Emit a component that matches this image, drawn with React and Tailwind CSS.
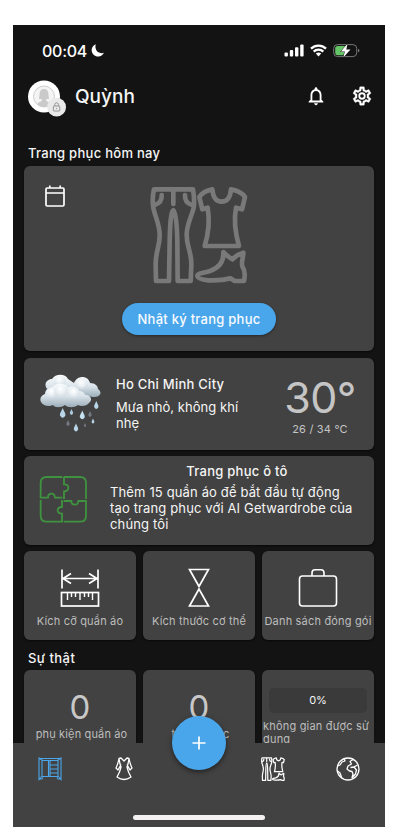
import React from "react";

const card = "bg-[#424242] rounded-[6px] shadow-[0_1px_2px_rgba(0,0,0,0.6)]";

function OutfitIcon({ className, stroke, width }) {
  return (
    <svg className={className} viewBox="120 33 294 294" fill="none" stroke={stroke} strokeWidth={width} strokeLinecap="round" strokeLinejoin="round">
      <path d="M132 43H249C252 61 254 80 251 98C246 122 231 144 230 178C229 214 245 230 244 270L242 318H203L202 200C201 150 197 105 190 105C183 105 180 150 179 200L177 318H138L137 270C136 230 150 214 149 178C148 144 134 122 130 98C127 80 128 61 132 43Z" />
      <path d="M190 48V87M155 60C156 76 148 86 134 90M225 60C224 76 232 86 246 90" />
      <path d="M307 43C309 66 317 80 335 80C353 80 361 66 363 43C380 46 395 51 405 66L396 103L378 98C370 140 376 175 387 213H284C296 175 300 140 293 98L277 103L268 66C278 51 290 46 307 43Z" />
      <path d="M340 231C347 240 357 247 368 253C376 243 389 236 400 233C400 248 393 262 397 274C404 284 406 300 402 318H374L361 310C340 316 322 317 295 316C275 314 262 310 262 302C264 294 280 294 300 288C328 278 342 258 340 231Z" />
    </svg>
  );
}

function StatusBar() {
  return (
    <div className="flex h-[51px] items-center pl-[29px] pr-[25px] text-[#fff]">
      <span className="w-[46px] whitespace-nowrap text-[16px] font-medium leading-5 tracking-[-0.25px]">00:04</span>
      <svg className="ml-[3px] h-[13px] w-[13px]" viewBox="0 0 13 13" fill="#fff">
        <path d="M4.800 0.200A6.400 6.400 0 1 0 12.900 8.800C10.500 9.600 7.400 8.900 5.900 7C4.400 5 4.100 2.300 4.800 0.200Z" />
      </svg>
      <svg className="ml-auto h-[13px] w-[20px]" viewBox="0 0 20 13" fill="#fff">
        <rect x="0.5" y="8.4" width="3.4" height="4.2" rx="1" />
        <rect x="5.8" y="6" width="3.4" height="6.6" rx="1" />
        <rect x="11" y="3.2" width="3.4" height="9.4" rx="1" />
        <rect x="16.2" y="0.5" width="3.4" height="12.1" rx="1" />
      </svg>
      <svg className="ml-[6px] h-[13px] w-[17px]" viewBox="0 0 17 13" fill="none" stroke="#fff" strokeWidth="2.3">
        <path d="M1 4.6A10.7 10.7 0 0 1 16 4.6M3.7 7.6A6.8 6.8 0 0 1 13.3 7.6" />
        <path d="M5.8 9.6Q8.5 7.6 11.2 9.6L8.5 12.6Z" fill="#fff" stroke="none" />
      </svg>
      <svg className="ml-[6px] h-[15px] w-[27px]" viewBox="0 0 27 15" fill="none">
        <rect x="0.7" y="1.6" width="23" height="12" rx="3.8" stroke="#777" strokeWidth="1" />
        <path d="M4.7 3H12V12.2H4.7Q2.2 12.2 2.2 9.7V5.5Q2.2 3 4.7 3Z" fill="#65c466" />
        <path d="M25 5.7V9.5Q26.4 9 26.4 7.6T25 5.7Z" fill="#777" />
        <path d="M14.500 0.800L7.800 8.500H11.900L10.300 14.500L17.500 6.600H13.300Z" fill="#fff" stroke="#131313" strokeWidth="1" paintOrder="stroke" />
      </svg>
    </div>
  );
}

function Header() {
  return (
    <div className="flex h-[47px] items-start pl-[15px] pr-[12px] pt-[3px]">
      <svg className="h-[40px] w-[40px] shrink-0" viewBox="0 0 40 40">
        <circle cx="16" cy="17.5" r="16" fill="#fff" />
        <circle cx="16" cy="17.5" r="10.5" fill="#f4f4f4" stroke="#cfcfcf" strokeWidth="1" />
        <path d="M16 10C12.6 10 11.6 12.5 11.5 15.5C11.5 18 11 19 10.8 20H13.7V22C11.5 23 9.8 23.3 9.4 25.2Q12 28 16 28T22.6 25.2C22.2 23.3 20.5 23 18.3 22V20H21.2C21 19 20.5 18 20.5 15.5C20.4 12.5 19.4 10 16 10Z" fill="#cacaca" />
        <circle cx="28.6" cy="28.2" r="9.4" fill="#e9e9e9" />
        <rect x="25.4" y="27" width="6.4" height="5" rx="0.6" fill="none" stroke="#8b8b8b" strokeWidth="0.9" />
        <path d="M26.8 27V25.6A1.8 1.8 0 0 1 30.4 25.6V27M28.1 29.5H29.1" fill="none" stroke="#8b8b8b" strokeWidth="0.9" />
      </svg>
      <span className="ml-[7px] mt-[5px] text-[19px] font-medium leading-[26px] text-[#f5f5f5]">Quỳnh</span>
      <svg className="ml-auto mt-[6px] h-[22px] w-[22px]" viewBox="0 0 24 24" fill="#fff">
        <path d="M12 22c1.1 0 2-.9 2-2h-4c0 1.1.9 2 2 2zm6-6v-5c0-3.07-1.63-5.64-4.5-6.32V4c0-.83-.67-1.500-1.500-1.500s-1.500.67-1.500 1.500v.68C7.640 5.360 6 7.920 6 11v5l-2 2v1h16v-1l-2-2zm-2 1H8v-6c0-2.480 1.510-4.500 4-4.500s4 2.020 4 4.500v6z" />
      </svg>
      <svg className="ml-[24px] mt-[6px] h-[22px] w-[22px]" viewBox="0 0 24 24" fill="#fff">
        <path d="M19.430 12.980c.04-.32.07-.64.07-.98 0-.34-.03-.66-.07-.98l2.110-1.650c.19-.15.24-.42.12-.64l-2-3.460c-.09-.16-.26-.25-.44-.25-.06 0-.12.010-.17.030l-2.490 1c-.52-.4-1.080-.73-1.690-.98l-.38-2.650C14.460 2.180 14.250 2 14 2h-4c-.25 0-.46.18-.49.42l-.38 2.650c-.61.25-1.170.59-1.690.98l-2.490-1c-.06-.02-.12-.03-.18-.03-.17 0-.34.09-.43.250l-2 3.460c-.13.22-.07.49.12.64l2.110 1.650c-.04.32-.07.65-.07.98 0 .33.030.66.07.98l-2.110 1.650c-.19.15-.24.42-.12.64l2 3.460c.09.16.26.25.44.25.06 0 .12-.01.17-.03l2.490-1c.52.4 1.080.73 1.690.98l.38 2.650c.03.24.24.42.49.42h4c.25 0 .46-.18.49-.42l.38-2.650c.61-.25 1.170-.59 1.690-.98l2.490 1c.06.02.12.03.18.03.17 0 .34-.09.43-.25l2-3.460c.12-.22.07-.49-.12-.64l-2.110-1.650zm-1.980-1.710c.04.31.05.52.05.73 0 .21-.02.43-.05.73l-.14 1.130.89.7 1.080.84-.7 1.210-1.270-.51-1.040-.42-.9.68c-.43.32-.84.56-1.250.73l-1.060.43-.16 1.130-.2 1.350h-1.400l-.19-1.350-.16-1.130-1.060-.43c-.43-.18-.83-.41-1.230-.71l-.91-.7-1.060.43-1.270.51-.7-1.210 1.080-.84.89-.7-.14-1.130c-.03-.31-.05-.54-.05-.74s.02-.43.05-.73l.14-1.130-.89-.7-1.080-.84.7-1.210 1.270.51 1.040.42.9-.68c.43-.32.84-.56 1.250-.73l1.060-.43.16-1.130.2-1.350h1.390l.19 1.350.16 1.130 1.060.43c.43.18.83.41 1.230.71l.91.7 1.060-.43 1.270-.51.7 1.210-1.070.85-.89.7.14 1.130z" stroke="#fff" strokeWidth="0.4" />
        <circle cx="12" cy="12" r="3" fill="none" stroke="#fff" strokeWidth="2" />
      </svg>
    </div>
  );
}

function RainIcon() {
  const drops = [
    [51.700, 172, 10, "#b9d6e8"], [57, 182, 6, "#737980"], [60.500, 171, 6, "#a9c7db"], [65, 186.500, 8, "#b9d6e8"],
    [71.300, 174, 9, "#c5e0f0"], [74, 184, 4, "#737980"], [79, 173, 6, "#737980"], [82, 180, 5, "#b9d6e8"], [85.300, 164, 8, "#b9d6e8"],
  ];
  return (
    <svg className="h-[60px] w-[62px] shrink-0" viewBox="29 133 62 60">
      <defs>
        <linearGradient id="cloud" x1="0" y1="0" x2="0" y2="1">
          <stop offset="0" stopColor="#fafcfd" /><stop offset="0.5" stopColor="#dce5eb" /><stop offset="1" stopColor="#9badb9" />
        </linearGradient>
        <radialGradient id="puff" cx="0.45" cy="0.25" r="0.75">
          <stop offset="0" stopColor="#fff" /><stop offset="0.5" stopColor="#e8eef2" /><stop offset="1" stopColor="#c4d1da" stopOpacity="0" />
        </radialGradient>
      </defs>
      <path d="M35 146C33 142 37 138 41 138C44 133 54 132 57 138C59 139 61 141 63 142C66 134 77 134 79 142C84 142 87 145 87 148C92 152 89 156 82 156L42 149C38 149 35 148 35 146Z" fill="url(#cloud)" />
      <circle cx="49" cy="141" r="6" fill="url(#puff)" /><circle cx="71" cy="144" r="6" fill="url(#puff)" />
      <path d="M30 161C28 157 31 154 34 153C34 148 39 146 42 146C44 142 54 141 57 147C60 144 67 146 68 150C71 150 74 152 74 154C80 154 82 159 78 162C76 165 70 166 67 164C63 167 57 167 54 164C50 167 44 167 42 164C38 166 32 165 30 161Z" fill="url(#cloud)" />
      <circle cx="41" cy="153" r="6" fill="url(#puff)" /><circle cx="50" cy="151" r="7" fill="url(#puff)" /><circle cx="63" cy="153" r="6" fill="url(#puff)" />
      {drops.map(([x, y, h, c]) => (
        <path key={x} d={`M${x} ${y - h / 2}C${x + h * 0.15} ${y - h * 0.1} ${x + h * 0.3} ${y} ${x + h * 0.27} ${y + h * 0.25}Q${x} ${y + h * 0.72} ${x - h * 0.27} ${y + h * 0.25}C${x - h * 0.3} ${y} ${x - h * 0.15} ${y - h * 0.1} ${x} ${y - h / 2}Z`} fill={c} />
      ))}
    </svg>
  );
}

function PuzzleIcon() {
  return (
    <svg className="h-[48px] w-[48px] shrink-0" viewBox="88 77 144 144" fill="none" stroke="#3f923f" strokeWidth="5.500">
      <path d="M158 83H111Q93 83 93 101V145H115Q115 133 125 133T136 145H158" />
      <path d="M162 83H211Q229 83 229 101V149M163 83V105Q176 105 176 115T163 126V149" />
      <path d="M93 152V199Q93 217 111 217H157V193Q144 193 144 183T157 173V152" />
      <path d="M162 155H185Q185 166 195 166T206 155H229V199Q229 217 211 217H162" />
    </svg>
  );
}

function Tool({ label, children }) {
  return (
    <div className={`flex h-[89px] flex-col items-center pt-[17px] ${card}`}>
      {children}
      <span className="mt-[5px] whitespace-nowrap text-[11px] leading-[16px] tracking-[0.18px] text-[#bdbdbd]">{label}</span>
    </div>
  );
}

function Tools() {
  return (
    <div className="mt-[6px] grid grid-cols-3 gap-[7px]">
      <Tool label="Kích cỡ quần áo">
        <svg className="h-[40px] w-[40px]" viewBox="0 0 40 40" fill="none" stroke="#fff" strokeWidth="1.700">
          <path d="M2 1.500V20.500M38 1.500V20.500M3 10.500H37M11 5.500L3 10.500L11 15.500M29 5.500L37 10.500L29 15.500" />
          <rect x="1.500" y="24.500" width="37" height="13.500" />
          <path d="M7.500 25V32M11.500 25V29M15.500 25V29M20 25V32M24.500 25V29M28.500 25V29M32.500 25V32" strokeWidth="1.400" />
        </svg>
      </Tool>
      <Tool label="Kích thước cơ thể">
        <svg className="h-[40px] w-[40px]" viewBox="0 0 40 40" fill="none" stroke="#fff" strokeWidth="1.700">
          <path d="M10.500 1.500H29.500L20 18.500ZM20 21L10.500 38H29.500Z" />
        </svg>
      </Tool>
      <Tool label="Danh sách đóng gói">
        <svg className="h-[40px] w-[40px]" viewBox="0 0 40 40" fill="none" stroke="#fff" strokeWidth="1.600">
          <rect x="1.500" y="8" width="37" height="30" rx="3" />
          <path d="M14 8V5Q14 1.800 17 1.800H23Q26 1.800 26 5V8" />
        </svg>
      </Tool>
    </div>
  );
}

function Count({ value, label }) {
  return (
    <div className={`flex h-[90px] flex-col items-center pt-[18px] ${card}`}>
      <span className="text-[33px] leading-[38px] text-[#c8c8c8]">{value}</span>
      <span className="whitespace-nowrap pl-[3px] text-[11px] leading-[16px] tracking-[0.15px] text-[#bdbdbd]">{label}</span>
    </div>
  );
}

function Facts() {
  return (
    <div className="mt-[3px] grid grid-cols-3 gap-[7px]">
      <Count value="0" label="phụ kiện quần áo" />
      <Count value="0" label="trang phục" />
      <div className={`flex h-[120px] flex-col pt-[18px] ${card}`}>
        <div className="mx-[7px] h-[25px] rounded-[5px] bg-[#3a3a3a] text-center text-[11px] leading-[25px] text-[#f5f5f5]">0%</div>
        <span className="mt-[7px] whitespace-nowrap pl-px text-[11px] leading-[13px] tracking-[0.2px] text-[#bdbdbd]">không gian được sử<br />dụng</span>
      </div>
    </div>
  );
}

function BottomNav() {
  return (
    <nav className="relative flex h-[84px] flex-col bg-[#424242]">
      <div className="grid grid-cols-5 items-start justify-items-center pt-[14px]">
        <svg className="h-[24px] w-[24px]" viewBox="0 0 24 24" fill="none" stroke="#4ba6ea" strokeWidth="1.100">
          <path d="M1 1L4 3V19L1 22.500ZM23 1L20 3V19L23 22.500ZM1 1.500H23M4 3.500H20M4 19.500H20M1 22H4L5 20.500M23 22H20L19 20.500M4 4V20M12 4V19.500M20 4V20M12 8H20M12 12H20M12 16H20M10.500 4V19" />
        </svg>
        <svg className="mr-[2px] h-[24px] w-[18px]" viewBox="0 0 18 24" fill="none" stroke="#fff" strokeWidth="1.300" strokeLinejoin="round">
          <path d="M4 1.500L6 1L9 4L12 1L14 1.500L13 7L12 10Q13 15 16 20Q9 25 2 20Q5 15 6 10L5 7ZM4 1.500Q3 7 1 11L3 13L6 7.500M14 1.500Q15 7 17 11L15 13L12 7.500" />
        </svg>
        <span />
        <OutfitIcon className="h-[24px] w-[24px]" stroke="#fff" width="15" />
        <svg className="h-[24px] w-[24px]" viewBox="0 0 24 24" fill="none" stroke="#fff" strokeWidth="1.300" strokeLinejoin="round">
          <circle cx="12" cy="12" r="11" />
          <path d="M1.500 9L4 8L6 5L9 4L8 1.800M1.500 14L4 16L5.500 20M17 2.500L14 4.500L15.500 7L12 9L11 12L13.500 14L16 14.500L17 17L16 21L19.500 17L20.500 13L18 10L14.500 10.500M18 10L21.500 8" />
        </svg>
      </div>
      <div className="mt-auto mb-[7px] h-[5px] w-[132px] self-center rounded-full bg-[#f4f0f2]" />
      <button className="absolute left-[159px] top-[-27px] flex h-[54px] w-[54px] items-center justify-center rounded-full bg-[#4aa6ea] shadow-[0_2px_5px_rgba(0,0,0,0.5)]">
        <svg className="h-[14px] w-[14px]" viewBox="0 0 14 14" stroke="#fff" strokeWidth="1.700"><path d="M7 .5V13.500M.5 7H13.500" /></svg>
      </button>
    </nav>
  );
}

export default function App() {
  return (
    <div className="h-[838px] w-[410px] overflow-hidden bg-white pl-[13px] pt-[25px] font-['Inter',sans-serif]">
      <div className="flex h-[802px] w-[372px] flex-col overflow-hidden bg-[#131313]">
        <StatusBar />
        <Header />
        <main className="min-h-0 flex-1 overflow-hidden pl-[11px] pr-[11px]">
          <h2 className="mt-[21px] pl-[4px] text-[13px] font-medium leading-[18px] tracking-[0.28px] text-[#f5f5f5]">Trang phục hôm nay</h2>
          <section className={`mt-[4px] grid h-[185px] grid-cols-[126px_98px_126px] grid-rows-[117px_1fr] ${card}`}>
            <svg className="ml-[19px] mt-[18px] h-[24px] w-[24px]" viewBox="0 0 24 24" fill="none" stroke="#fff" strokeWidth="1.700">
              <rect x="3" y="4" width="18" height="18" rx="1.200" /><path d="M3 9H21M6.800 4V1.500M17.200 4V1.500" />
            </svg>
            <OutfitIcon className="mt-[20px] h-[98px] w-[98px]" stroke="#797979" width="14" />
            <span />
            <button className="col-span-3 mt-[20px] h-[32px] w-[154px] justify-self-center whitespace-nowrap rounded-full bg-[#4aa6ea] text-[13px] font-medium leading-[32px] tracking-[0.25px] text-[#f8fbff] shadow-[0_1px_3px_rgba(0,0,0,0.4)]">Nhật ký trang phục</button>
          </section>
          <section className={`mt-[7px] flex h-[92px] ${card}`}>
            <div className="ml-[16px] mt-[16px]"><RainIcon /></div>
            <div className="ml-[14px] w-[160px] pt-[16px] text-[#f5f5f5]">
              <h3 className="whitespace-nowrap text-[13px] font-medium leading-[20px] tracking-[0.25px]">Ho Chi Minh City</h3>
              <p className="mt-[5px] whitespace-nowrap text-[13px] leading-[16px] tracking-[0.05px]">Mưa nhỏ, không khí<br />nhẹ</p>
            </div>
            <div className="w-[88px] pt-[16px] text-center text-[#c5c5c5]">
              <div className="whitespace-nowrap text-[43px] leading-[46px] tracking-[-0.6px]">30°</div>
              <div className="mt-[1px] whitespace-nowrap text-[11px] leading-[16px] tracking-[0.2px]">26 / 34 °C</div>
            </div>
          </section>
          <section className={`mt-[6px] flex h-[89px] ${card}`}>
            <div className="ml-[15px] mt-[19px]"><PuzzleIcon /></div>
            <div className="ml-[23px] w-[254px] pt-[7px] text-[#f5f5f5]">
              <h3 className="text-center text-[13px] font-medium leading-[17px] tracking-[0.25px]">Trang phục ô tô</h3>
              <p className="mt-[4px] whitespace-nowrap text-[13px] leading-[16px] tracking-[0.14px]">Thêm 15 quần áo để bắt đầu tự động<br />tạo trang phục với AI Getwardrobe của<br />chúng tôi</p>
            </div>
          </section>
          <Tools />
          <h2 className="mt-[9px] pl-[4px] text-[13px] font-medium leading-[18px] tracking-[0.45px] text-[#f5f5f5]">Sự thật</h2>
          <Facts />
        </main>
        <BottomNav />
      </div>
    </div>
  );
}
